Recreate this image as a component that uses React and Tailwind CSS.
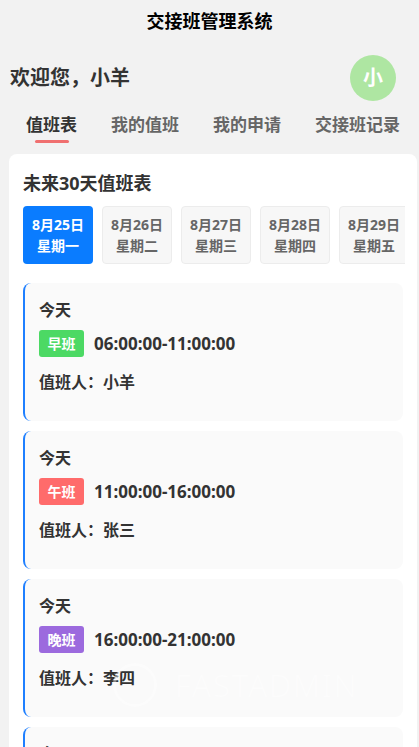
import React from "react";

const dates = [
  ["8月25日", "星期一"],
  ["8月26日", "星期二"],
  ["8月27日", "星期三"],
  ["8月28日", "星期四"],
  ["8月29日", "星期五"],
  ["8月30日", "星期六"],
];

const shifts = [
  { name: "早班", color: "bg-[#4cd964]", time: "06:00:00-11:00:00", person: "小羊" },
  { name: "午班", color: "bg-[#ff6b6b]", time: "11:00:00-16:00:00", person: "张三" },
  { name: "晚班", color: "bg-[#9c6ade]", time: "16:00:00-21:00:00", person: "李四" },
  { name: "早班", color: "bg-[#4cd964]", time: "06:00:00-11:00:00", person: "小羊" },
];

export default function App() {
  return (
    <div
      className="relative w-[419px] h-[747px] overflow-hidden bg-[#f2f2f2] text-[#333]"
      style={{ fontFamily: '"Noto Sans", "Noto Sans CJK SC", sans-serif' }}
    >
      <div className="h-[42px] flex items-center justify-center text-[18px] font-bold text-black">
        交接班管理系统
      </div>
      <div className="flex items-center justify-between pl-[10px] pr-[23px] pt-[7px] h-[64px]">
        <div className="text-[20px] font-bold text-[#333]">欢迎您，小羊</div>
        <div className="w-[46px] h-[46px] rounded-full bg-[#aee6a2] flex items-center justify-center text-white text-[20px] font-bold">
          小
        </div>
      </div>
      <div className="flex gap-[34px] pl-[26px] h-[44px] items-start pt-[6px]">
        <div className="relative text-[17px] font-bold text-[#333] leading-[26px]">
          值班表
          <div className="absolute left-[9px] top-[28px] w-[34px] h-[3px] rounded-full bg-[#f07070]" />
        </div>
        <div className="text-[17px] font-bold text-[#666] leading-[26px]">我的值班</div>
        <div className="text-[17px] font-bold text-[#666] leading-[26px]">我的申请</div>
        <div className="text-[17px] font-bold text-[#666] leading-[26px]">交接班记录</div>
      </div>
      <div className="ml-[9px] mr-[2px] mt-[4px] bg-white rounded-t-[8px] pt-[17px] pl-[14px] pr-[14px] pb-4">
        <div className="text-[18px] font-bold text-[#333] leading-[24px]">未来30天值班表</div>
        <div className="mt-[11px] mr-[-2px] flex gap-[9px] overflow-hidden">
          {dates.map(([d, w], i) => (
            <div
              key={d}
              className={
                "shrink-0 w-[70px] h-[58px] rounded-[4px] flex flex-col items-center justify-center font-bold " +
                (i === 0
                  ? "bg-[#0a7cff] text-white"
                  : "bg-[#f7f7f7] border border-[#ececec] text-[#666]")
              }
            >
              <div className="text-[14px] leading-[20px]">{d}</div>
              <div className="text-[14px] leading-[20px] mt-[1px]">{w}</div>
            </div>
          ))}
        </div>
        <div className="mt-[19px] flex flex-col gap-[10px]">
          {shifts.map((s, i) => (
            <div
              key={i}
              className="h-[138px] bg-[#fafafa] rounded-[8px] border-l-2 border-[#1e7fff] pl-[14px] pt-[16px]"
            >
              <div className="text-[16px] font-bold text-[#333] leading-[22px]">今天</div>
              <div className="mt-[9px] flex items-center gap-[10px]">
                <div
                  className={
                    "w-[45px] h-[27px] rounded-[3px] flex items-center justify-center text-white text-[14px] font-bold " +
                    s.color
                  }
                >
                  {s.name}
                </div>
                <div className="text-[17px] font-bold text-[#333]">{s.time}</div>
              </div>
              <div className="mt-[14px] text-[16px] font-bold text-[#333] leading-[22px]">
                值班人：{s.person}
              </div>
            </div>
          ))}
        </div>
      </div>
      <div className="absolute left-[113px] top-[663px] flex items-center gap-[18px] pointer-events-none opacity-40">
        <div className="w-[44px] h-[44px] rounded-full border-[3px] border-white" />
        <div className="text-[31px] tracking-[2px] text-white font-light leading-none">FASTADMIN</div>
      </div>
    </div>
  );
}
